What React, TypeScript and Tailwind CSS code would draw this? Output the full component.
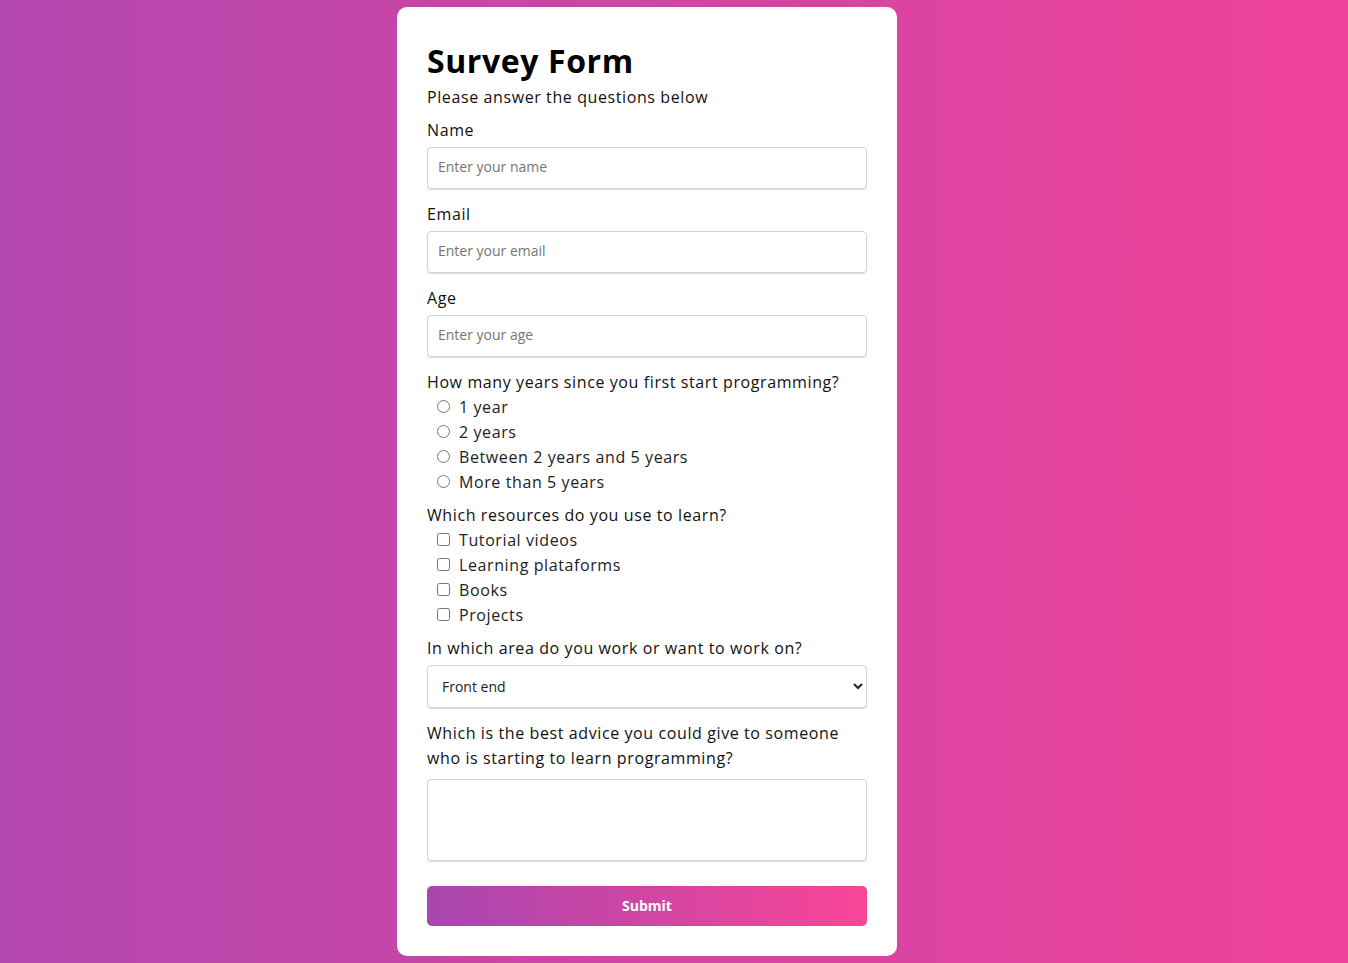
import React from "react";

export default function App() {
  const years = ["1 year", "2 years", "Between 2 years and 5 years", "More than 5 years"];
  const res = ["Tutorial videos", "Learning plataforms", "Books", "Projects"];
  return (
    <div className="min-h-[963px] w-full bg-[linear-gradient(90deg,#b247ae,#f0429a)] pt-[7px] pb-[7px] font-['Open_Sans',sans-serif]">
      <form className="ml-[397px] w-[500px] rounded-[10px] bg-white px-[30px] pt-[30px] pb-[30px] text-[#111]">
        <h1 className="text-[32px] font-bold leading-[48px] tracking-[0.6px] text-black">Survey Form</h1>
        <p className="mb-[9px] text-base leading-6 tracking-[0.6px]">Please answer the questions below</p>

        {[
          ["Name", "Enter your name"],
          ["Email", "Enter your email"],
          ["Age", "Enter your age"],
        ].map(([l, p]) => (
          <div key={l} className="mb-[13px]">
            <label className="mb-[5px] block text-base leading-6 tracking-[0.6px]">{l}</label>
            <input
              placeholder={p}
              className="block h-[42px] w-full rounded-[4px] border border-[#d4d4d4] px-[10px] pb-[3px] text-sm shadow-[0_1px_1px_rgba(0,0,0,0.15)] outline-none placeholder:text-[#757575]"
            />
          </div>
        ))}

        <div className="mb-[9px]">
          <p className="text-base leading-6 tracking-[0.6px]">How many years since you first start programming?</p>
          {years.map((y) => (
            <label key={y} className="flex h-[25px] items-center text-base tracking-[0.6px] text-[#222]">
              <input type="radio" name="years" className="ml-[10px] mr-[9px] h-[13px] w-[13px]" />
              {y}
            </label>
          ))}
        </div>

        <div className="mb-[9px]">
          <p className="text-base leading-6 tracking-[0.6px]">Which resources do you use to learn?</p>
          {res.map((y) => (
            <label key={y} className="flex h-[25px] items-center text-base tracking-[0.6px] text-[#222]">
              <input type="checkbox" className="ml-[10px] mr-[9px] h-[13px] w-[13px]" />
              {y}
            </label>
          ))}
        </div>

        <div className="mb-[13px]">
          <label className="mb-[5px] block text-base leading-6 tracking-[0.6px]">
            In which area do you work or want to work on?
          </label>
          <select className="block h-[43px] w-full rounded-[4px] border border-[#d4d4d4] pl-[10px] pr-[7px] pb-[1px] text-sm text-[#222] shadow-[0_1px_1px_rgba(0,0,0,0.15)] outline-none">
            <option>Front end</option>
            <option>Back end</option>
            <option>Full stack</option>
          </select>
        </div>

        <div className="mb-[25px]">
          <label className="mb-[8px] block text-base leading-[25px] tracking-[0.6px]">
            Which is the best advice you could give to someone who is starting to learn programming?
          </label>
          <textarea className="block h-[82px] w-full resize-none rounded-[4px] border border-[#d4d4d4] shadow-[0_1px_1px_rgba(0,0,0,0.15)] outline-none" />
        </div>

        <button
          type="button"
          className="block h-[40px] w-full rounded-[5px] bg-[linear-gradient(90deg,#a846af,#f94597)] text-sm font-bold text-white"
        >
          Submit
        </button>
      </form>
    </div>
  );
}
